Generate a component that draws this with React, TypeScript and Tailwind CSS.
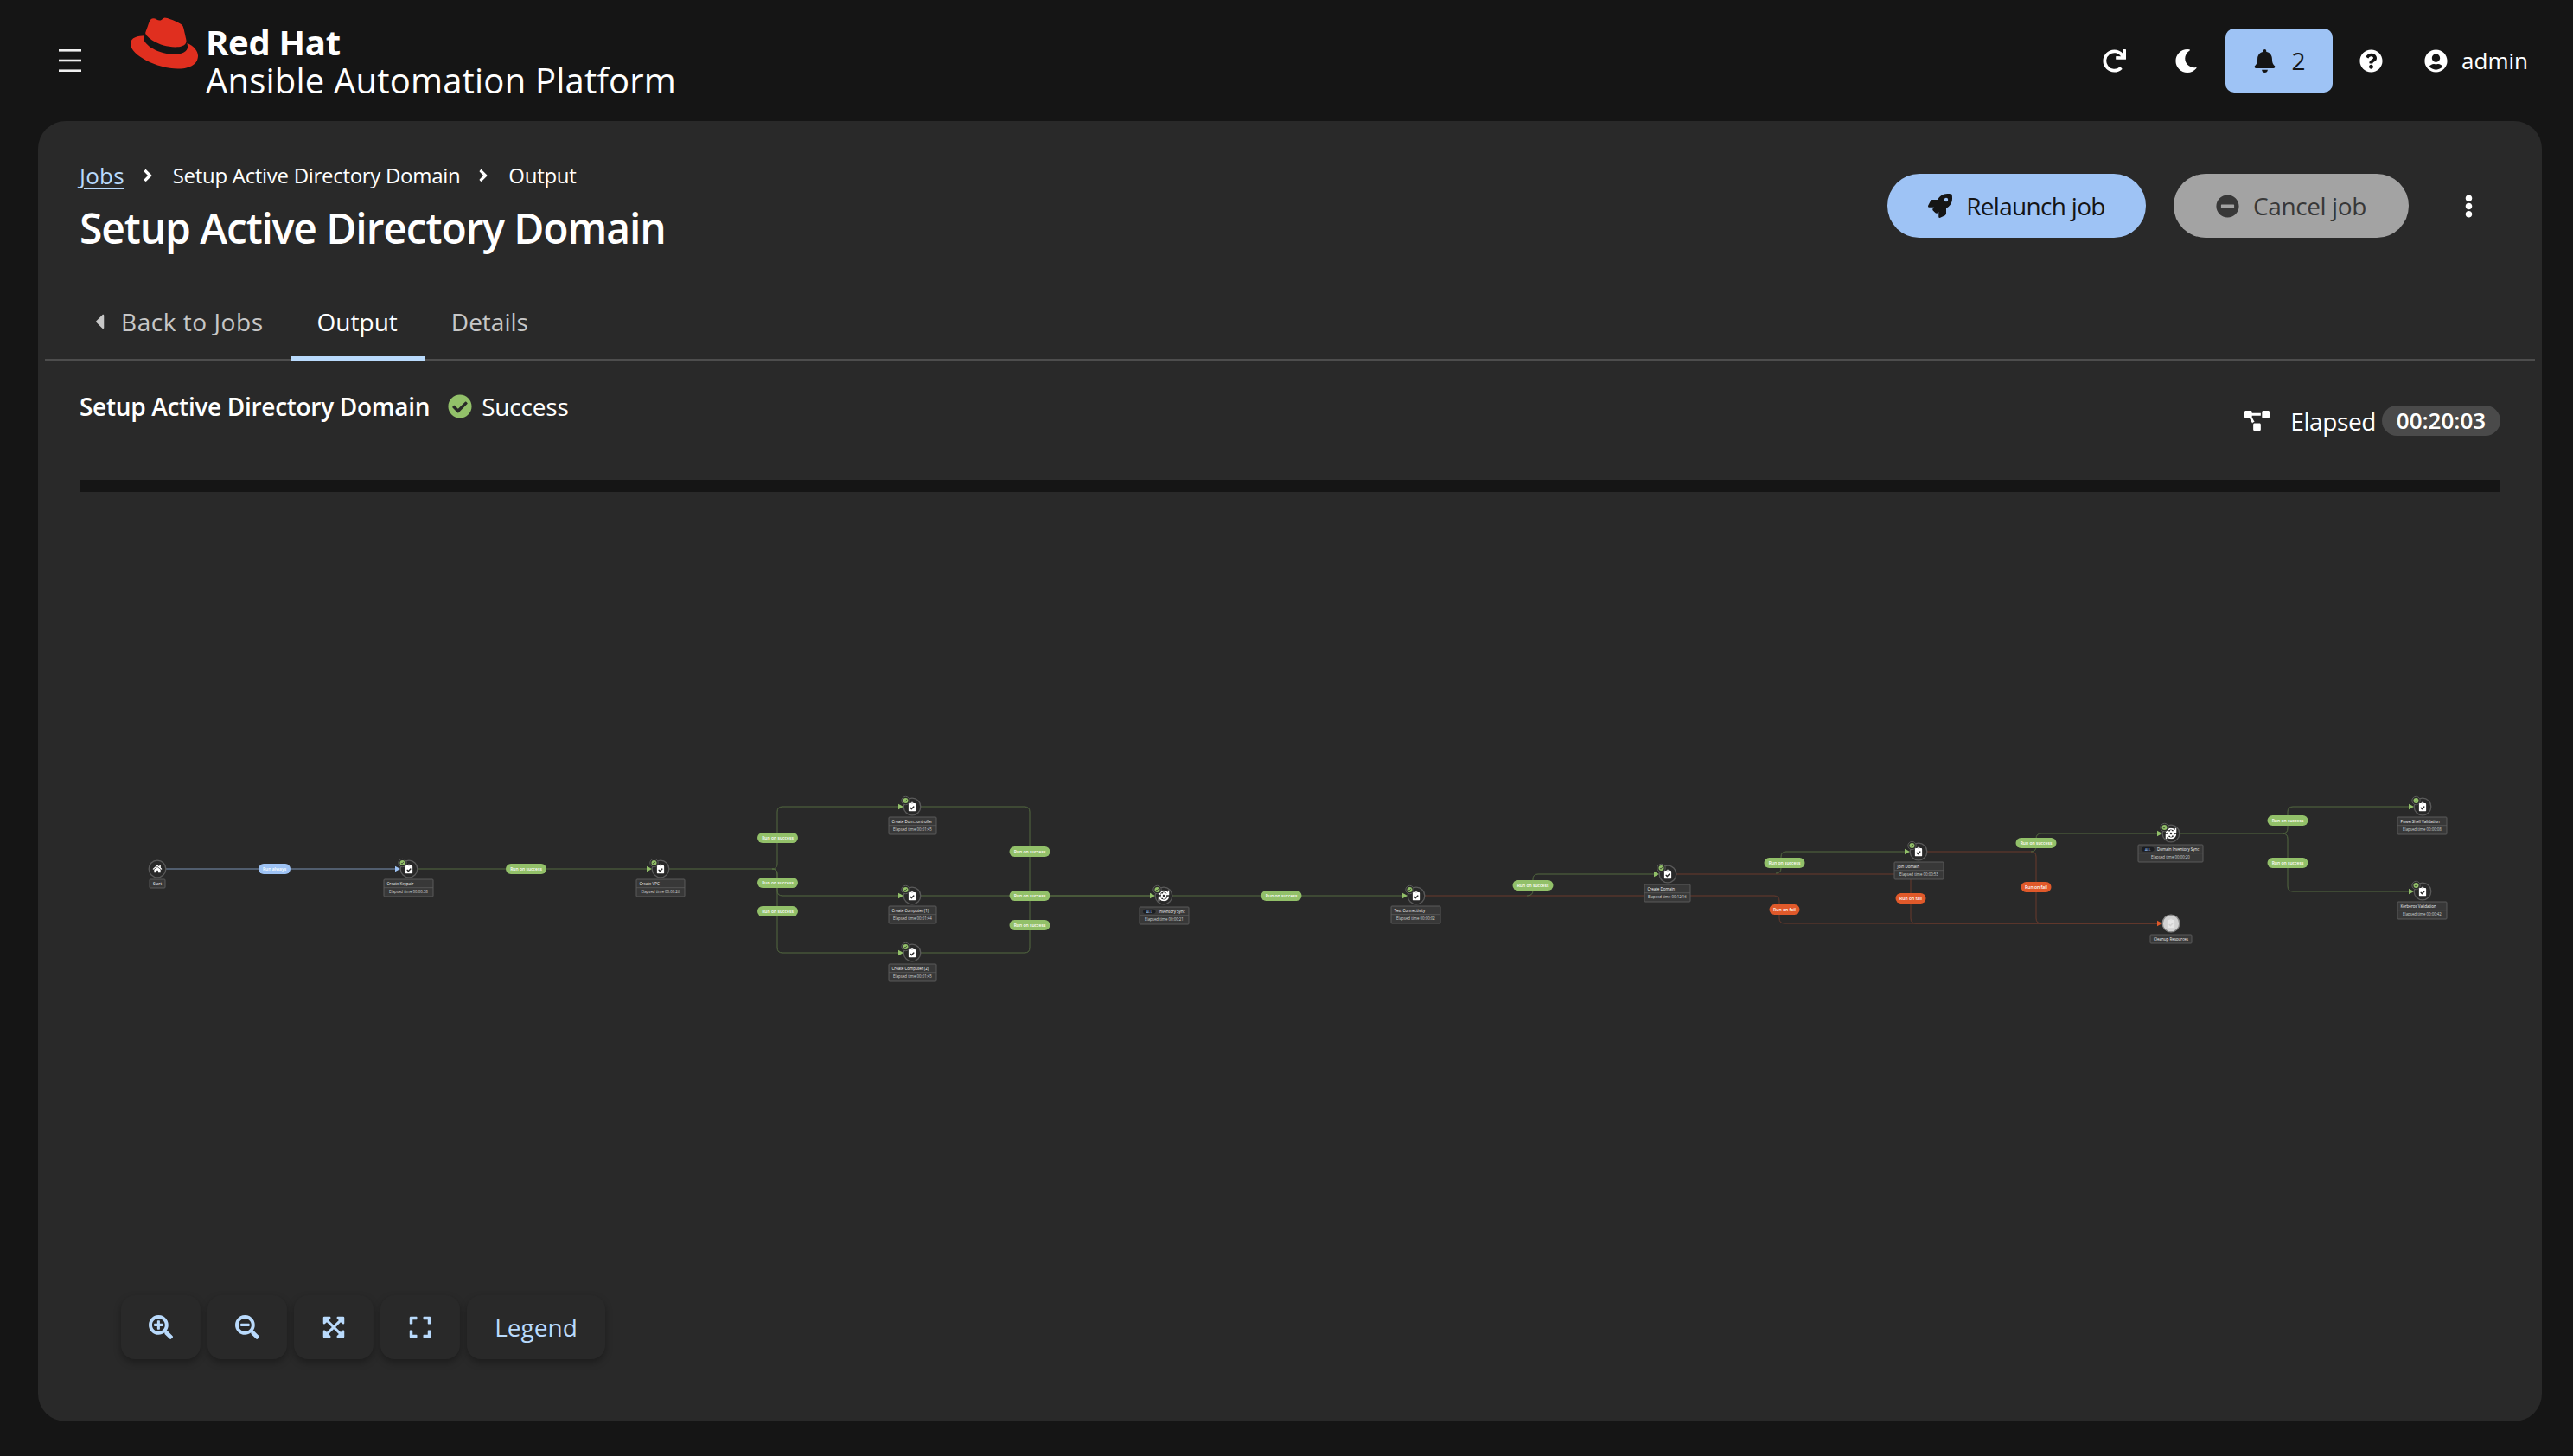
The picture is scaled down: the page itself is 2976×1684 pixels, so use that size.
import React from "react";
import {
  FaRedhat, FaRedo, FaMoon, FaBell, FaQuestionCircle, FaUserCircle, FaRocket, FaMinusCircle, FaEllipsisV,
  FaProjectDiagram, FaSearchPlus, FaSearchMinus, FaExpandArrowsAlt, FaExpand, FaCheckCircle, FaCaretLeft,
  FaAngleRight, FaHome, FaClipboardCheck, FaCog, FaSync,
} from "react-icons/fa";

const GREEN = "#92c069";
const RED = "#e0592a";
const BLUE = "#9ec3f5";
const LG = "#546b40";
const LR = "#6b3a2c";
const LB = "#7a93b5";
const font = '"Open Sans", "Liberation Sans", sans-serif';

type N = { x: number; y: number; kind: "job" | "sync" | "home" | "clean"; name: string; time?: string; lx: number; lw: number; ly: number; all?: boolean; arrow?: string };

const nodes: N[] = [
  { x: 182, y: 1005, kind: "home", name: "Start", lx: 173, lw: 18, ly: 1017 },
  { x: 473, y: 1005, kind: "job", name: "Create Keypair", time: "00:00:38", lx: 444, lw: 57, ly: 1017, arrow: BLUE },
  { x: 764, y: 1005, kind: "job", name: "Create VPC", time: "00:00:26", lx: 736, lw: 56, ly: 1017, arrow: GREEN },
  { x: 1055, y: 933, kind: "job", name: "Create Dom...ontroller", time: "00:01:45", lx: 1028, lw: 55, ly: 945, arrow: GREEN },
  { x: 1055, y: 1036, kind: "job", name: "Create Computer (1)", time: "00:01:44", lx: 1028, lw: 55, ly: 1048, arrow: GREEN },
  { x: 1055, y: 1102, kind: "job", name: "Create Computer (2)", time: "00:01:45", lx: 1028, lw: 55, ly: 1115, arrow: GREEN },
  { x: 1346, y: 1036, kind: "sync", name: "Inventory Sync", time: "00:00:21", lx: 1318, lw: 57, ly: 1049, all: true, arrow: GREEN },
  { x: 1638, y: 1036, kind: "job", name: "Test Connectivity", time: "00:00:02", lx: 1609, lw: 57, ly: 1048, arrow: GREEN },
  { x: 1929, y: 1011, kind: "job", name: "Create Domain", time: "00:12:16", lx: 1902, lw: 53, ly: 1023, arrow: GREEN },
  { x: 2219, y: 985, kind: "job", name: "Join Domain", time: "00:00:53", lx: 2191, lw: 57, ly: 997, arrow: GREEN },
  { x: 2511, y: 964, kind: "sync", name: "Domain Inventory Sync", time: "00:00:20", lx: 2473, lw: 75, ly: 977, all: true, arrow: GREEN },
  { x: 2802, y: 933, kind: "job", name: "PowerShell Validation", time: "00:00:08", lx: 2773, lw: 57, ly: 945, arrow: GREEN },
  { x: 2802, y: 1031, kind: "job", name: "Kerberos Validation", time: "00:00:42", lx: 2773, lw: 57, ly: 1043, arrow: GREEN },
  { x: 2511, y: 1068, kind: "clean", name: "Cleanup Resources", lx: 2487, lw: 48, ly: 1081, arrow: RED },
];

const edges: [string, string][] = [
  ["M192 1005H457", LB],
  ["M483 1005H748", LG],
  ["M774 1005H893Q899 1005 899 999V939Q899 933 905 933H1039", LG],
  ["M893 1005Q899 1005 899 1011V1030Q899 1036 905 1036H1039", LG],
  ["M893 1005Q899 1005 899 1011V1096Q899 1102 905 1102H1039", LG],
  ["M1065 933H1185Q1191 933 1191 939V1030Q1191 1036 1197 1036H1330", LG],
  ["M1065 1036H1330", LG],
  ["M1065 1102H1185Q1191 1102 1191 1096V1042Q1191 1036 1197 1036", LG],
  ["M1356 1036H1622", LG],
  ["M1648 1036H2052Q2058 1036 2058 1042V1062Q2058 1068 2064 1068H2495", LR],
  ["M1766 1036Q1773 1036 1773 1030V1017Q1773 1011 1779 1011H1913", LG],
  ["M1939 1011H2204Q2210 1011 2210 1017V1062Q2210 1068 2216 1068H2495", LR],
  ["M2054 1010Q2060 1010 2060 1004V991Q2060 985 2066 985H2203", LG],
  ["M2229 985H2349Q2355 985 2355 991V1062Q2355 1068 2361 1068H2495", LR],
  ["M2349 985Q2355 985 2355 979V970Q2355 964 2361 964H2495", LG],
  ["M2521 964H2640Q2646 964 2646 958V939Q2646 933 2652 933H2786", LG],
  ["M2640 964Q2646 964 2646 970V1025Q2646 1031 2652 1031H2786", LG],
];

const pills: [number, number, number, string, string][] = [
  [317.5, 1005, 37, "Run always", BLUE],
  [608.5, 1005, 47, "Run on success", GREEN],
  [899.5, 969, 47, "Run on success", GREEN],
  [899.5, 1021, 47, "Run on success", GREEN],
  [899.5, 1054, 47, "Run on success", GREEN],
  [1191, 985, 47, "Run on success", GREEN],
  [1191, 1036, 47, "Run on success", GREEN],
  [1191, 1070, 47, "Run on success", GREEN],
  [1482, 1036, 47, "Run on success", GREEN],
  [1773, 1024, 47, "Run on success", GREEN],
  [2064, 998, 47, "Run on success", GREEN],
  [2355, 975, 47, "Run on success", GREEN],
  [2646, 949, 47, "Run on success", GREEN],
  [2646, 998, 47, "Run on success", GREEN],
  [2064, 1052, 35, "Run on fail", RED],
  [2210, 1039, 35, "Run on fail", RED],
  [2355, 1026, 35, "Run on fail", RED],
];

function Node({ n }: { n: N }) {
  const { x, y } = n;
  const h = n.time ? 20 : 10;
  return (
    <g>
      {n.arrow && <polygon points={`${x - 16},${y - 3.2} ${x - 16},${y + 3.2} ${x - 10},${y}`} fill={n.arrow} />}
      <circle cx={x} cy={y} r={9.8} fill={n.kind === "clean" ? "#d2d2d2" : "#292929"} stroke={n.kind === "clean" ? "#8a8a8a" : "#5a5a5a"} strokeWidth={1.3} />
      {n.kind === "job" && <FaClipboardCheck x={x - 5.5} y={y - 5.5} size={11} color="#ffffff" />}
      {n.kind === "clean" && <FaClipboardCheck x={x - 5.5} y={y - 5.5} size={11} color="#e6e6e6" />}
      {n.kind === "home" && <FaHome x={x - 5.5} y={y - 5.5} size={11} color="#ffffff" />}
      {n.kind === "sync" && (
        <g>
          <FaSync x={x - 6.5} y={y - 6.5} size={13} color="#ffffff" />
          <FaCog x={x - 4} y={y - 4} size={8} color="#ffffff" />
        </g>
      )}
      {n.kind !== "home" && n.kind !== "clean" && (
        <g>
          <circle cx={x - 7.5} cy={y - 7} r={4.7} fill="#292929" stroke="#5a5a5a" strokeWidth={1} />
          <circle cx={x - 7.5} cy={y - 7} r={3} fill={GREEN} />
          <path d={`M${x - 9} ${y - 7}l1 1.2 2-2.4`} fill="none" stroke="#292929" strokeWidth={0.7} />
        </g>
      )}
      <rect x={n.lx} y={n.ly} width={n.lw} height={h} rx={1} fill="#383838" stroke="#5a5a5a" strokeWidth={1} />
      {n.time && <line x1={n.lx} x2={n.lx + n.lw} y1={n.ly + 9.7} y2={n.ly + 9.7} stroke="#5a5a5a" strokeWidth={0.8} />}
      {n.all && (
        <g>
          <rect x={n.lx + 3.5} y={n.ly + 2.2} width={15.5} height={6} rx={3} fill="#1b1d21" stroke="#505050" strokeWidth={0.4} />
          <text x={n.lx + 11.2} y={n.ly + 6.9} fontSize={4.2} fill={BLUE} textAnchor="middle">ALL</text>
        </g>
      )}
      <text x={n.all ? n.lx + 22 : n.time ? n.lx + 3.5 : n.lx + n.lw / 2} y={n.ly + 6.8} fontSize={4.5} fontWeight={500} fill="#f5f5f5" textAnchor={n.all || n.time ? "start" : "middle"}>{n.name}</text>
      {n.time && <text x={n.lx + n.lw / 2} y={n.ly + 16.4} fontSize={4.4} fill="#d2d2d2" textAnchor="middle">Elapsed time {n.time}</text>}
    </g>
  );
}

function Graph() {
  return (
    <svg width={2896} height={1075} viewBox="44 569 2896 1075" className="block" style={{ fontFamily: font }}>
      {edges.map(([d, c], i) => <path key={i} d={d} fill="none" stroke={c} strokeWidth={1} />)}
      {nodes.map((n) => <Node key={n.name} n={n} />)}
      {pills.map(([x, y, w, t, c], i) => (
        <g key={i}>
          <rect x={x - w / 2} y={y - 6} width={w} height={12} rx={6} fill={c} />
          <text x={x} y={y + 1.8} fontSize={5} fontWeight={600} fill="#ffffff" textAnchor="middle">{t}</text>
        </g>
      ))}
    </svg>
  );
}

function Ctl({ children, w = "w-[92px]" }: { children: React.ReactNode; w?: string }) {
  return (
    <div className={`${w} h-[74px] flex items-center justify-center rounded-[16px] bg-[#292929] shadow-[0_4px_8px_rgba(0,0,0,0.3)] text-[#b9dafc]`}>
      {children}
    </div>
  );
}

export default function App() {
  return (
    <div className="w-[2976px] h-[1684px] flex flex-col bg-[#151515] text-white overflow-hidden" style={{ fontFamily: font }}>
      <header className="h-[140px] shrink-0 flex items-center pl-[68px] pr-[52px]">
        <svg width="26" height="26" viewBox="0 0 26 26" className="shrink-0">
          <rect x="0" y="0" width="26" height="2.6" fill="#f0f0f0" />
          <rect x="0" y="11.7" width="26" height="2.6" fill="#f0f0f0" />
          <rect x="0" y="23.4" width="26" height="2.6" fill="#f0f0f0" />
        </svg>
        <div className="ml-[56px] w-[80px] h-[60px] -mt-[40px] flex items-center justify-center shrink-0">
          <FaRedhat size={78} color="#e02f1f" />
        </div>
        <div className="ml-[8px] flex flex-col mt-[1px]">
          <span className="text-[40px] leading-[44px] font-bold tracking-[-0.3px]">Red Hat</span>
          <span className="text-[40px] leading-[44px] tracking-[0.2px]">Ansible Automation Platform</span>
        </div>
        <div className="ml-auto flex items-center">
          <FaRedo size={27} />
          <FaMoon size={27} className="ml-[56px]" />
          <div className="ml-[32px] w-[124px] h-[74px] rounded-[10px] bg-[#9ec3f5] flex items-center justify-center gap-[18px] text-[#151515] text-[28px]">
            <FaBell size={27} />
            <span>2</span>
          </div>
          <FaQuestionCircle size={27} className="ml-[31px]" />
          <FaUserCircle size={27} className="ml-[48px]" />
          <span className="ml-[16px] text-[26px]">admin</span>
        </div>
      </header>

      <main className="ml-[44px] mr-[36px] mb-[40px] flex-1 min-h-0 flex flex-col rounded-[32px] bg-[#292929] overflow-hidden">
        <div className="pt-[49px] pl-[48px] pr-[71px] flex justify-between h-[206px] shrink-0">
          <div>
            <nav className="flex items-center text-[24px] h-[28px] leading-[28px]">
              <span className="text-[#b9dafc] underline underline-offset-[4px] text-[26px] tracking-[0.2px]">Jobs</span>
              <FaAngleRight size={22} className="ml-[16px]" />
              <span className="ml-[18px] tracking-[-0.3px]">Setup Active Directory Domain</span>
              <FaAngleRight size={22} className="ml-[16px]" />
              <span className="ml-[18px] tracking-[-0.3px]">Output</span>
            </nav>
            <h1 className="mt-[15px] text-[48px] leading-[64px] font-semibold tracking-[-1.1px]">Setup Active Directory Domain</h1>
          </div>
          <div className="flex items-start pt-[12px]">
            <div className="w-[299px] h-[74px] rounded-full bg-[#9ec3f5] text-[#151515] flex items-center justify-center gap-[16px] text-[28px] tracking-[-0.7px]">
              <FaRocket size={28} />
              <span>Relaunch job</span>
            </div>
            <div className="ml-[32px] w-[272px] h-[74px] rounded-full bg-[#a3a3a3] text-[#383838] flex items-center justify-center gap-[16px] text-[28px] tracking-[-0.4px]">
              <FaMinusCircle size={27} />
              <span>Cancel job</span>
            </div>
            <div className="ml-[56px] h-[74px] flex items-center">
              <FaEllipsisV size={27} />
            </div>
          </div>
        </div>

        <div className="mx-[8px] h-[72px] shrink-0 flex border-b-[3px] border-[#4d4d4d] pl-[27px] pb-[17px] text-[28px]">
          <div className="px-[31px] flex items-center text-[#c7c7c7] tracking-[0.55px]">
            <FaCaretLeft size={28} className="-ml-[9px] mr-[11px]" />
            <span>Back to Jobs</span>
          </div>
          <div className="relative px-[31px] flex items-center">
            <span>Output</span>
            <div className="absolute left-0 right-0 -bottom-[20px] h-[6px] bg-[#b9dafc]" />
          </div>
          <div className="px-[31px] flex items-center text-[#c7c7c7]">
            <span>Details</span>
          </div>
        </div>

        <div className="pl-[48px] pr-[48px] h-[137px] shrink-0 flex justify-between">
          <div className="flex items-center h-[28px] mt-[38px] text-[28px]">
            <span className="font-semibold tracking-[-0.3px]">Setup Active Directory Domain</span>
            <FaCheckCircle size={28} color={GREEN} className="ml-[21px]" />
            <span className="ml-[11px] tracking-[-0.2px]">Success</span>
          </div>
          <div className="flex items-center h-[35px] mt-[51px] text-[28px]">
            <FaProjectDiagram size={29} />
            <span className="ml-[24px] tracking-[-0.4px]">Elapsed</span>
            <span className="ml-[7px] w-[137px] h-[35px] rounded-full bg-[#4a4a4a] flex items-center justify-center text-[26px] font-semibold">00:20:03</span>
          </div>
        </div>

        <div className="mx-[48px] h-[14px] shrink-0 bg-[#151515]" />

        <div className="relative flex-1 min-h-0">
          <Graph />
          <div className="absolute left-[96px] bottom-[72px] flex gap-[8px]">
            <Ctl><FaSearchPlus size={28} /></Ctl>
            <Ctl><FaSearchMinus size={28} /></Ctl>
            <Ctl><FaExpandArrowsAlt size={28} /></Ctl>
            <Ctl><FaExpand size={28} /></Ctl>
            <Ctl w="w-[160px]"><span className="text-[28px]">Legend</span></Ctl>
          </div>
        </div>
      </main>
    </div>
  );
}
